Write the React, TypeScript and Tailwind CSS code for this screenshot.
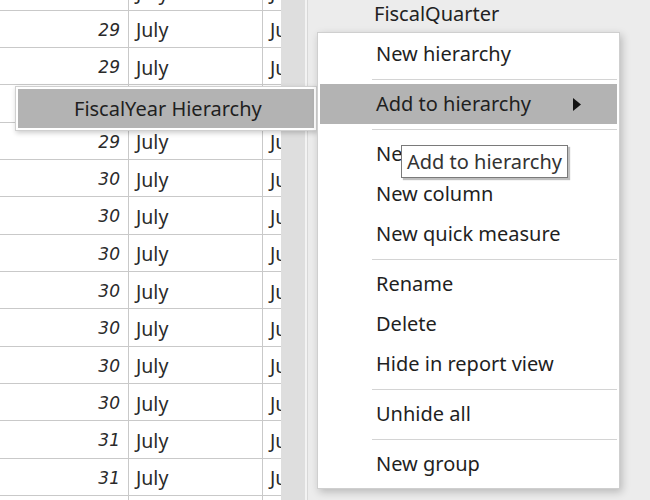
import React from 'react';

type Row = { day: number; month: string };

const rows: Row[] = [
  { day: 29, month: 'July' },
  { day: 29, month: 'July' },
  { day: 29, month: 'July' },
  { day: 29, month: 'July' },
  { day: 29, month: 'July' },
  { day: 30, month: 'July' },
  { day: 30, month: 'July' },
  { day: 30, month: 'July' },
  { day: 30, month: 'July' },
  { day: 30, month: 'July' },
  { day: 30, month: 'July' },
  { day: 30, month: 'July' },
  { day: 31, month: 'July' },
  { day: 31, month: 'July' },
  { day: 31, month: 'July' },
];

type MenuEntry = { label: string; submenu?: boolean; active?: boolean } | 'sep';

const menu: MenuEntry[] = [
  { label: 'New hierarchy' },
  'sep',
  { label: 'Add to hierarchy', submenu: true, active: true },
  'sep',
  { label: 'New measure' },
  { label: 'New column' },
  { label: 'New quick measure' },
  'sep',
  { label: 'Rename' },
  { label: 'Delete' },
  { label: 'Hide in report view' },
  'sep',
  { label: 'Unhide all' },
  'sep',
  { label: 'New group' },
];

const ui = "font-['Noto_Sans',sans-serif]";

const DataGrid: React.FC = () => (
  <div className="w-[281px] h-full overflow-hidden bg-white">
    <div className="-mt-[26.5px]">
      {rows.map((row, i) => (
        <div key={i} className="flex h-[37.33px] border-b border-[#c9c9c9] text-[#2a2a2a]">
          <div className="w-[129px] shrink-0 border-r border-[#c9c9c9] flex items-center justify-end pr-[8px] pt-[3px] font-['DejaVu_Sans',sans-serif] italic text-[17px]">
            {row.day}
          </div>
          <div className={`w-[134px] shrink-0 border-r border-[#c9c9c9] flex items-center pl-[7px] pt-[2px] text-[19.5px] ${ui}`}>
            {row.month}
          </div>
          <div className={`flex-1 flex items-center pl-[7px] pt-[2px] text-[19.5px] whitespace-nowrap overflow-hidden ${ui}`}>
            {row.month}
          </div>
        </div>
      ))}
    </div>
  </div>
);

const ContextMenu: React.FC = () => (
  <div className={`absolute left-[317px] top-[32px] w-[303px] bg-white border border-[#cfcfcf] shadow-[2px_3px_8px_rgba(0,0,0,0.22)] pt-[1px] pb-[4px] text-[20px] text-[#1f1f1f] ${ui}`}>
    {menu.map((entry, i) =>
      entry === 'sep' ? (
        <div key={i} className="h-[10px] pt-[5px] pl-[54px] pr-[2px]">
          <div className="h-[1px] bg-[#d4d4d4]" />
        </div>
      ) : (
        <div
          key={i}
          className={`mx-[2px] h-[40px] flex items-center pl-[56px] pr-[36px] ${entry.active ? 'bg-[#b3b3b3]' : ''}`}
        >
          <span className="flex-1 whitespace-nowrap">{entry.label}</span>
          {entry.submenu && (
            <svg width="8" height="13" viewBox="0 0 8 13">
              <path d="M0 0 L8 6.5 L0 13 Z" fill="#111" />
            </svg>
          )}
        </div>
      )
    )}
  </div>
);

const App: React.FC = () => {
  return (
    <div className="relative w-[650px] h-[500px] overflow-hidden flex bg-[#ececec]">
      <DataGrid />
      <div className="w-[26px] h-full bg-[#dedede] border-r-2 border-[#f3f3f3]" />
      <div className={`flex-1 h-full border-l border-[#d8d8d8] bg-[#ececec] text-[20px] text-[#222] ${ui}`}>
        <div className="pl-[66px] h-[28px] flex items-center">FiscalQuarter</div>
      </div>

      {/* open submenu for "Add to hierarchy" */}
      <div className={`absolute left-[15px] top-[86px] w-[302px] h-[45px] bg-white border border-[#d0d0d0] p-[2px] shadow-[1px_2px_5px_rgba(0,0,0,0.2)] ${ui}`}>
        <div className="h-full bg-[#b3b3b3] flex items-center pl-[56px] text-[20px] text-[#1f1f1f]">
          FiscalYear Hierarchy
        </div>
      </div>

      <ContextMenu />

      {/* hover tooltip */}
      <div className={`absolute left-[401px] top-[145px] w-[167px] h-[33px] bg-white border border-[#7a7a7a] shadow-[2px_2px_1px_rgba(0,0,0,0.25)] flex items-center pl-[5px] text-[20px] text-[#333] whitespace-nowrap ${ui}`}>
        Add to hierarchy
      </div>
    </div>
  );
};

export default App;
